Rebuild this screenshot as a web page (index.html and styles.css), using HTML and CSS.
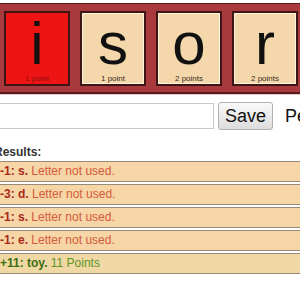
FILE: index.html
```html
<!DOCTYPE html>
<html lang="en">
<head>
  <meta charset="UTF-8">
  <meta name="viewport" content="width=device-width, initial-scale=1.0">
  <title>Word Tiles</title>
  <link rel="stylesheet" href="styles.css">
</head>
<body>

  <div class="rack">
    <div class="tile selected">
      <span class="letter">i</span>
      <span class="points">1 point</span>
    </div>
    <div class="tile">
      <span class="letter">s</span>
      <span class="points">1 point</span>
    </div>
    <div class="tile">
      <span class="letter">o</span>
      <span class="points">2 points</span>
    </div>
    <div class="tile">
      <span class="letter">r</span>
      <span class="points">2 points</span>
    </div>
  </div>

  <div class="page">
    <div class="controls">
      <input class="word" type="text">
      <button class="save">Save</button>
      <span class="score">Penalty</span>
    </div>

    <div class="results-title">Results:</div>
    <div class="results">
      <div class="row bad"><b>-1: s.</b> Letter not used.</div>
      <div class="row bad"><b>-3: d.</b> Letter not used.</div>
      <div class="row bad"><b>-1: s.</b> Letter not used.</div>
      <div class="row bad"><b>-1: e.</b> Letter not used.</div>
      <div class="row good"><b>+11: toy.</b> 11 Points</div>
    </div>
  </div>

</body>
</html>
```

FILE: styles.css
```css
body {
  margin: 0;
  overflow: hidden;
  white-space: nowrap;
  font-family: "Liberation Sans", Arial, sans-serif;
  background: #fff;
}
.rack {
  margin-top: 3px;
  display: flex;
  gap: 10px;
  padding: 7px 0 6px 4px;
  background: #a8393c;
  border-top: 1px solid #5a1a1a;
  border-bottom: 2px solid #5a1a1a;
  box-shadow: 0 1px 0 #e8c8c8;
}
.tile {
  width: 62px;
  height: 71px;
  display: flex;
  flex-direction: column;
  align-items: center;
  background: #f4d7aa;
  border: 2px solid #3e1414;
  box-shadow: inset 0 0 0 1px #fff3dd;
}
.tile.selected {
  background: #ee1414;
  box-shadow: none;
}
.letter {
  font-size: 60px;
  line-height: 58px;
  height: 58px;
  padding-top: 2px;
  color: #111;
}
.points {
  margin-top: 1px;
  font-size: 8px;
  line-height: 9px;
  color: #3a2a1a;
}
.tile.selected .points {
  color: #8a1010;
}
.page {
  margin-left: -6px;
  margin-right: -10px;
}
.controls {
  display: flex;
  align-items: center;
  margin-top: 8px;
  height: 28px;
}
.controls > * {
  flex-shrink: 0;
}
.word {
  width: 220px;
  height: 26px;
  box-sizing: border-box;
  border: 1px solid #c8c8c8;
  margin: 0;
}
.save {
  margin-left: 4px;
  width: 55px;
  height: 28px;
  font-family: "Liberation Sans", Arial, sans-serif;
  font-size: 18px;
  color: #111;
  background: linear-gradient(#fafafa, #dcdcdc);
  border: 1px solid #b0b0b0;
  border-radius: 3px;
  padding: 0;
}
.score {
  margin-left: 12px;
  font-size: 18px;
  color: #111;
}
.results-title {
  margin-top: 16px;
  font-size: 12px;
  font-weight: bold;
  line-height: 12px;
  color: #333;
}
.results {
  margin-top: 3px;
  display: flex;
  flex-direction: column;
  gap: 2px;
}
.row {
  height: 19px;
  line-height: 19px;
  padding-left: 5px;
  font-size: 12px;
  background: #f6d6a6;
  border: 1px solid #978a76;
}
.row.bad {
  color: #d45a3c;
}
.row.bad b {
  color: #a8281a;
}
.row.good {
  background: #f0d8a4;
  color: #5e9424;
}
.row.good b {
  color: #3c6e12;
}
```
